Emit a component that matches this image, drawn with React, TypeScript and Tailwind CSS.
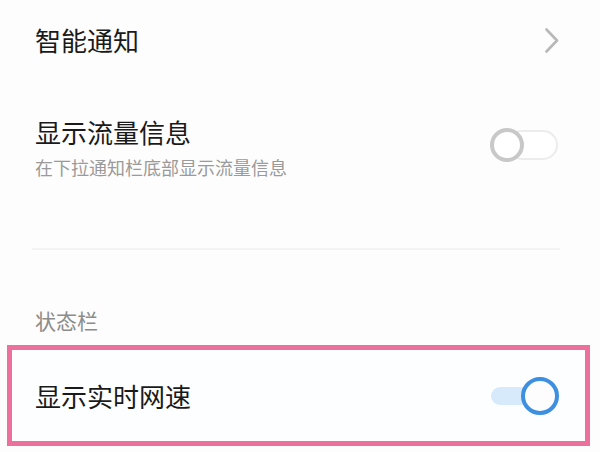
function Chevron() {
  return (
    <svg width="14" height="25" viewBox="0 0 14 25" fill="none" className="shrink-0">
      <polyline points="1.5,1.5 12,12.5 1.5,23.5" stroke="#b8b8b8" strokeWidth="2.6" strokeLinecap="round" strokeLinejoin="round" />
    </svg>
  );
}

function SwitchOff() {
  return (
    <div className="relative h-[34px] w-[68px] shrink-0">
      <div className="absolute left-[17px] top-[2px] h-[30px] w-[51px] rounded-full border-2 border-[#ececec] bg-white" />
      <div className="absolute left-0 top-0 h-[34px] w-[34px] rounded-full border-[4px] border-[#c8c8c8] bg-white" />
    </div>
  );
}

function SwitchOn() {
  return (
    <div className="relative h-[38px] w-[68px] shrink-0">
      <div className="absolute left-0 top-[10px] h-[18px] w-[50px] rounded-l-full bg-[#d6eafb]" />
      <div className="absolute right-0 top-0 h-[38px] w-[38px] rounded-full border-[4px] border-[#3f8fe0] bg-[#fdfdfd]" />
    </div>
  );
}

export default function App() {
  return (
    <div
      className="flex h-[452px] w-[600px] flex-col overflow-hidden bg-[#fdfdfd] text-[#1a1a1a]"
      style={{ fontFamily: '"Noto Sans CJK SC", "Noto Sans", sans-serif' }}
    >
      {/* 智能通知 */}
      <div className="flex items-center justify-between pl-[35px] pr-[41px] pt-[27px]">
        <span className="text-[26px] leading-[26px]">智能通知</span>
        <Chevron />
      </div>

      {/* 显示流量信息 */}
      <div className="mt-[66px] flex items-start justify-between pl-[35px] pr-[42px]">
        <div className="flex flex-col">
          <span className="text-[26px] leading-[26px]">显示流量信息</span>
          <span className="mt-[13px] text-[18px] leading-[18px] text-[#9a9a9a]">在下拉通知栏底部显示流量信息</span>
        </div>
        <div className="mt-[9px]">
          <SwitchOff />
        </div>
      </div>

      <div className="ml-[32px] mt-[72px] h-[2px] w-[528px] bg-[#f3f3f3]" />

      <div className="mt-[60px] pl-[35px] text-[21px] leading-[21px] text-[#8c8c8c]">状态栏</div>

      {/* 显示实时网速 */}
      <div className="ml-[7px] mt-[14px] flex h-[101px] w-[583px] items-center justify-between border-[5px] border-[#ec709b] bg-[#fdfeff] pl-[23px] pr-[26px]">
        <span className="text-[26px] leading-[26px]">显示实时网速</span>
        <SwitchOn />
      </div>
    </div>
  );
}
